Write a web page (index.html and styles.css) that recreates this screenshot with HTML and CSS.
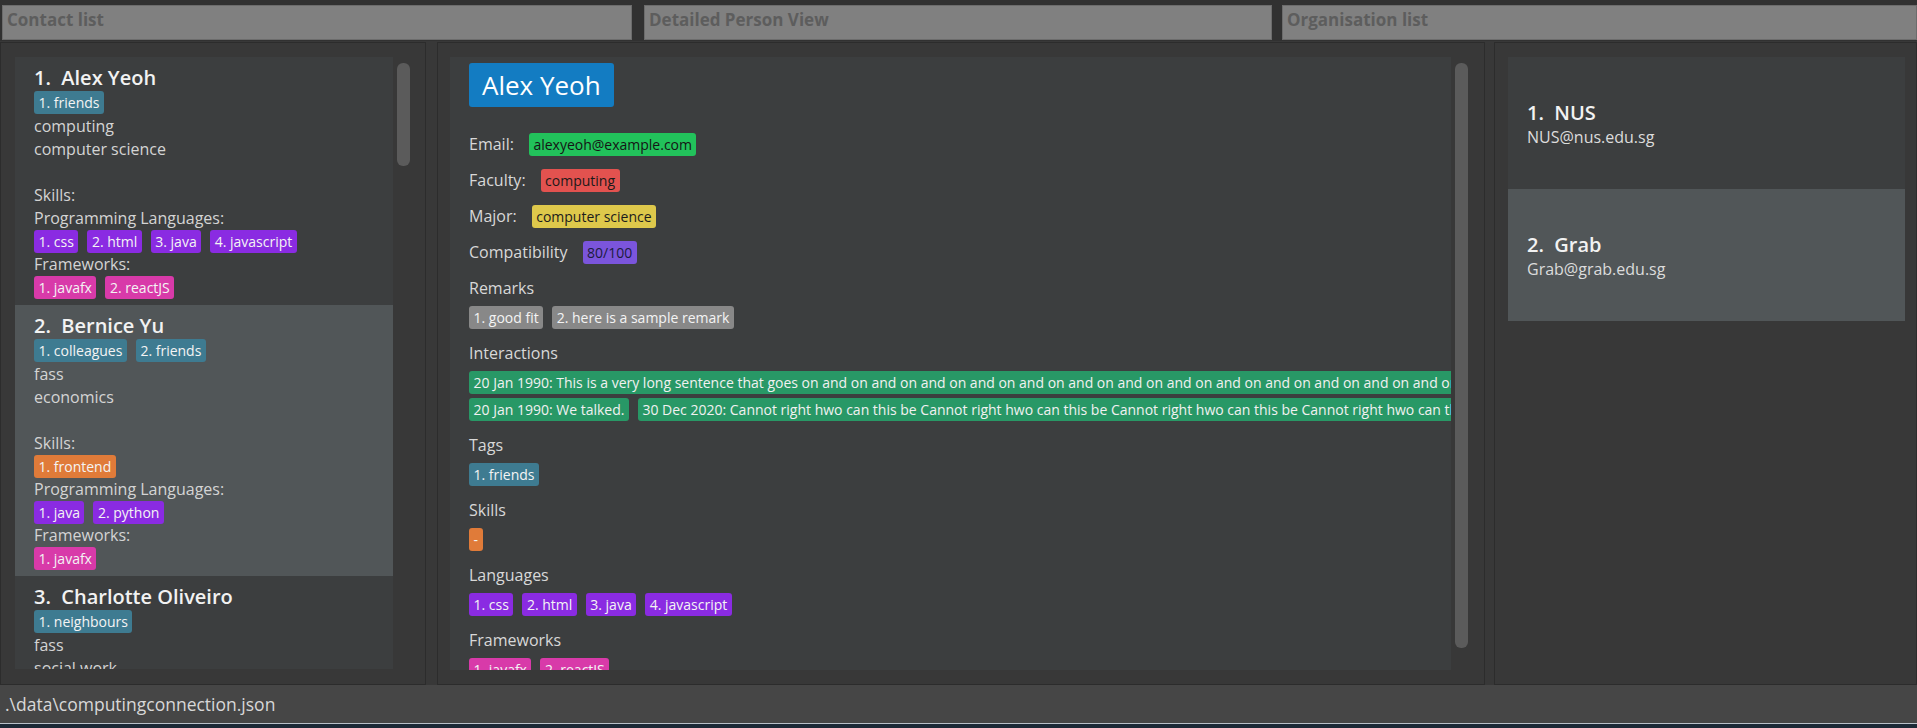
FILE: index.html
```html
<!DOCTYPE html>
<html lang="en">
<head>
<meta charset="utf-8">
<title>Computing Connection</title>
<link rel="stylesheet" href="styles.css">
</head>
<body>
<div class="app">
  <div class="headers">
    <div class="hdr hdr-contacts">Contact list</div>
    <div class="hdr hdr-detail">Detailed Person View</div>
    <div class="hdr hdr-org">Organisation list</div>
  </div>

  <div class="panels">
    <section class="panel panel-contacts">
      <div class="contact-list">
        <article class="card">
          <div class="card-name">1.&nbsp; Alex Yeoh</div>
          <div class="tags"><span class="tag t-tag">1. friends</span></div>
          <div class="info">
            <div class="line">computing</div>
            <div class="line">computer science</div>
            <div class="line blank"></div>
            <div class="line">Skills:</div>
            <div class="line">Programming Languages:</div>
            <div class="tags">
              <span class="tag t-lang">1. css</span>
              <span class="tag t-lang">2. html</span>
              <span class="tag t-lang">3. java</span>
              <span class="tag t-lang">4. javascript</span>
            </div>
            <div class="line">Frameworks:</div>
            <div class="tags">
              <span class="tag t-fw">1. javafx</span>
              <span class="tag t-fw">2. reactJS</span>
            </div>
          </div>
        </article>

        <article class="card alt">
          <div class="card-name">2.&nbsp; Bernice Yu</div>
          <div class="tags"><span class="tag t-tag">1. colleagues</span><span class="tag t-tag">2. friends</span></div>
          <div class="info">
            <div class="line">fass</div>
            <div class="line">economics</div>
            <div class="line blank"></div>
            <div class="line">Skills:</div>
            <div class="tags"><span class="tag t-skill">1. frontend</span></div>
            <div class="line">Programming Languages:</div>
            <div class="tags">
              <span class="tag t-lang">1. java</span>
              <span class="tag t-lang">2. python</span>
            </div>
            <div class="line">Frameworks:</div>
            <div class="tags"><span class="tag t-fw">1. javafx</span></div>
          </div>
        </article>

        <article class="card">
          <div class="card-name">3.&nbsp; Charlotte Oliveiro</div>
          <div class="tags"><span class="tag t-tag">1. neighbours</span></div>
          <div class="info">
            <div class="line">fass</div>
            <div class="line">social work</div>
          </div>
        </article>
      </div>
      <div class="scroll"><div class="thumb thumb-contacts"></div></div>
    </section>

    <section class="panel panel-detail">
      <div class="detail">
        <div class="name-badge">Alex Yeoh</div>
        <div class="fields">
          <div class="field-row"><span class="label">Email:</span><span class="tag t-email">alexyeoh@example.com</span></div>
          <div class="field-row"><span class="label">Faculty:</span><span class="tag t-faculty">computing</span></div>
          <div class="field-row"><span class="label">Major:</span><span class="tag t-major">computer science</span></div>
          <div class="field-row"><span class="label">Compatibility</span><span class="tag t-compat">80/100</span></div>
        </div>
        <div class="section">
          <div class="section-label">Remarks</div>
          <div class="tags"><span class="tag t-remark">1. good fit</span><span class="tag t-remark">2. here is a sample remark</span></div>
        </div>
        <div class="section">
          <div class="section-label">Interactions</div>
          <div class="tags nowrap"><span class="tag t-inter">20 Jan 1990: This is a very long sentence that goes on and on and on and on and on and on and on and on and on and on and on and on and on and on and on and on and on and on and on and on and on and on and on and on</span></div>
          <div class="tags nowrap"><span class="tag t-inter">20 Jan 1990: We talked.</span><span class="tag t-inter">30 Dec 2020: Cannot right hwo can this be Cannot right hwo can this be Cannot right hwo can this be Cannot right hwo can this be Cannot right hwo can this be Cannot right hwo can this be</span></div>
        </div>
        <div class="section">
          <div class="section-label">Tags</div>
          <div class="tags"><span class="tag t-tag">1. friends</span></div>
        </div>
        <div class="section">
          <div class="section-label">Skills</div>
          <div class="tags"><span class="tag t-skill">-</span></div>
        </div>
        <div class="section">
          <div class="section-label">Languages</div>
          <div class="tags">
            <span class="tag t-lang">1. css</span>
            <span class="tag t-lang">2. html</span>
            <span class="tag t-lang">3. java</span>
            <span class="tag t-lang">4. javascript</span>
          </div>
        </div>
        <div class="section">
          <div class="section-label">Frameworks</div>
          <div class="tags">
            <span class="tag t-fw">1. javafx</span>
            <span class="tag t-fw">2. reactJS</span>
          </div>
        </div>
      </div>
      <div class="scroll"><div class="thumb thumb-detail"></div></div>
    </section>

    <section class="panel panel-org">
      <div class="org-list">
        <article class="org-card">
          <div class="org-name">1.&nbsp; NUS</div>
          <div class="org-email">NUS@nus.edu.sg</div>
        </article>
        <article class="org-card alt">
          <div class="org-name">2.&nbsp; Grab</div>
          <div class="org-email">Grab@grab.edu.sg</div>
        </article>
      </div>
    </section>
  </div>

  <div class="status">.\data\computingconnection.json</div>
  <div class="bottom-line"></div>
</div>
</body>
</html>
```

FILE: styles.css
```css
html, body {
  margin: 0;
  padding: 0;
  width: 1917px;
  height: 728px;
  overflow: hidden;
}

body {
  background: #383838;
  font-family: "Open Sans", "Noto Sans", sans-serif;
}

.app {
  display: flex;
  flex-direction: column;
  width: 1917px;
  height: 728px;
}

/* ---------- headers ---------- */
.headers {
  display: flex;
  height: 41px;
  box-sizing: border-box;
  padding: 5px 0 1px 2px;
  background: #313131;
  flex-shrink: 0;
}

.hdr {
  height: 35px;
  box-sizing: border-box;
  background: #808080;
  border: 1px solid #6c6c6c;
  color: #5d5d5d;
  font-size: 17px;
  font-weight: 700;
  line-height: 27px;
  padding-left: 4px;
  white-space: nowrap;
  overflow: hidden;
}

.hdr-contacts { width: 630px; }
.hdr-detail { width: 628px; margin-left: 12px; }
.hdr-org { width: 635px; margin-left: 10px; }

/* ---------- panels ---------- */
.panels {
  display: flex;
  height: 644px;
  box-sizing: border-box;
  padding-top: 1px;
  flex-shrink: 0;
}

.panel {
  display: flex;
  align-items: flex-start;
  height: 643px;
  box-sizing: border-box;
  border: 1px solid #2c2c2c;
  background: #383838;
}

.panel-contacts {
  width: 426px;
  padding: 14px 15px 15px 14px;
}

.panel-detail {
  width: 1048px;
  margin-left: 11px;
  padding: 14px 16px 14px 12px;
}

.panel-org {
  width: 423px;
  margin-left: 9px;
  padding: 14px 11px 14px 13px;
}

.scroll {
  width: 13px;
  margin-left: 4px;
  flex-shrink: 0;
}

.thumb {
  margin-top: 6px;
  width: 13px;
  border-radius: 6px;
  background: #5b5b5b;
}

.thumb-contacts { height: 103px; }
.thumb-detail { height: 585px; }

/* ---------- contact list ---------- */
.contact-list {
  width: 378px;
  height: 612px;
  overflow: hidden;
  flex-shrink: 0;
}

.card {
  background: #3c3e3f;
  padding: 7px 0 6px 19px;
  color: #d4d4d4;
  font-size: 16px;
  line-height: 23px;
}

.card.alt { background: #515658; }

.card-name {
  font-size: 20px;
  font-weight: 600;
  line-height: 27px;
  color: #f2f2f2;
  white-space: nowrap;
}

.info { padding-top: 1px; }

.line { height: 23px; white-space: nowrap; }

/* ---------- tags ---------- */
.tags {
  display: flex;
  flex-wrap: wrap;
  gap: 4px 9px;
}

.tags.nowrap { flex-wrap: nowrap; }

.tag {
  display: inline-block;
  flex-shrink: 0;
  height: 23px;
  line-height: 23px;
  padding: 0 4.5px;
  border-radius: 3px;
  font-size: 14px;
  color: #f4f4f4;
  white-space: nowrap;
}

.t-tag { background: #3e7b91; }
.t-lang { background: #8a2be2; }
.t-fw { background: #d83aa9; }
.t-skill { background: #e07b39; }
.t-remark { background: #888888; }
.t-inter { background: #289866; color: #f1f1f1; }
.t-email { background: #22c25b; color: #151515; }
.t-faculty { background: #e2524f; color: #1a1a1a; }
.t-major { background: #dec84b; color: #1c1c1c; }
.t-compat { background: #7b55dc; color: #1c1c40; }

/* ---------- detail ---------- */
.detail {
  width: 1001px;
  height: 613px;
  box-sizing: border-box;
  padding: 6px 0 0 19px;
  background: #3c3e3f;
  overflow: hidden;
  flex-shrink: 0;
  color: #d8d8d8;
  font-size: 16px;
}

.name-badge {
  display: inline-block;
  height: 44px;
  line-height: 44px;
  padding: 0 13px;
  border-radius: 3px;
  background: #137cc2;
  color: #ffffff;
  font-size: 26px;
}

.fields { margin-top: 26px; }

.field-row {
  display: flex;
  align-items: center;
  gap: 15px;
  height: 23px;
  margin-bottom: 13px;
}

.label { line-height: 23px; }

.section { margin-bottom: 13px; }

.section-label {
  line-height: 23px;
  margin-bottom: 6px;
}

.section .tags.nowrap + .tags.nowrap { margin-top: 4px; }

/* ---------- organisations ---------- */
.org-list {
  width: 397px;
  flex-shrink: 0;
}

.org-card {
  height: 132px;
  box-sizing: border-box;
  padding: 3px 0 0 19px;
  display: flex;
  flex-direction: column;
  justify-content: center;
  background: #3c3e3f;
}

.org-card.alt { background: #515658; }

.org-name {
  font-size: 20px;
  font-weight: 600;
  line-height: 26px;
  color: #f2f2f2;
}

.org-email {
  font-size: 16px;
  line-height: 23px;
  color: #dcdcdc;
}

/* ---------- status ---------- */
.status {
  height: 38px;
  box-sizing: border-box;
  padding-left: 5px;
  background: #464646;
  color: #d8d8d8;
  font-size: 17.5px;
  line-height: 38px;
  flex-shrink: 0;
}

.bottom-line {
  height: 5px;
  box-sizing: border-box;
  border-top: 1px solid #b9c1c9;
  background: #1c2936;
  flex-shrink: 0;
}
```
